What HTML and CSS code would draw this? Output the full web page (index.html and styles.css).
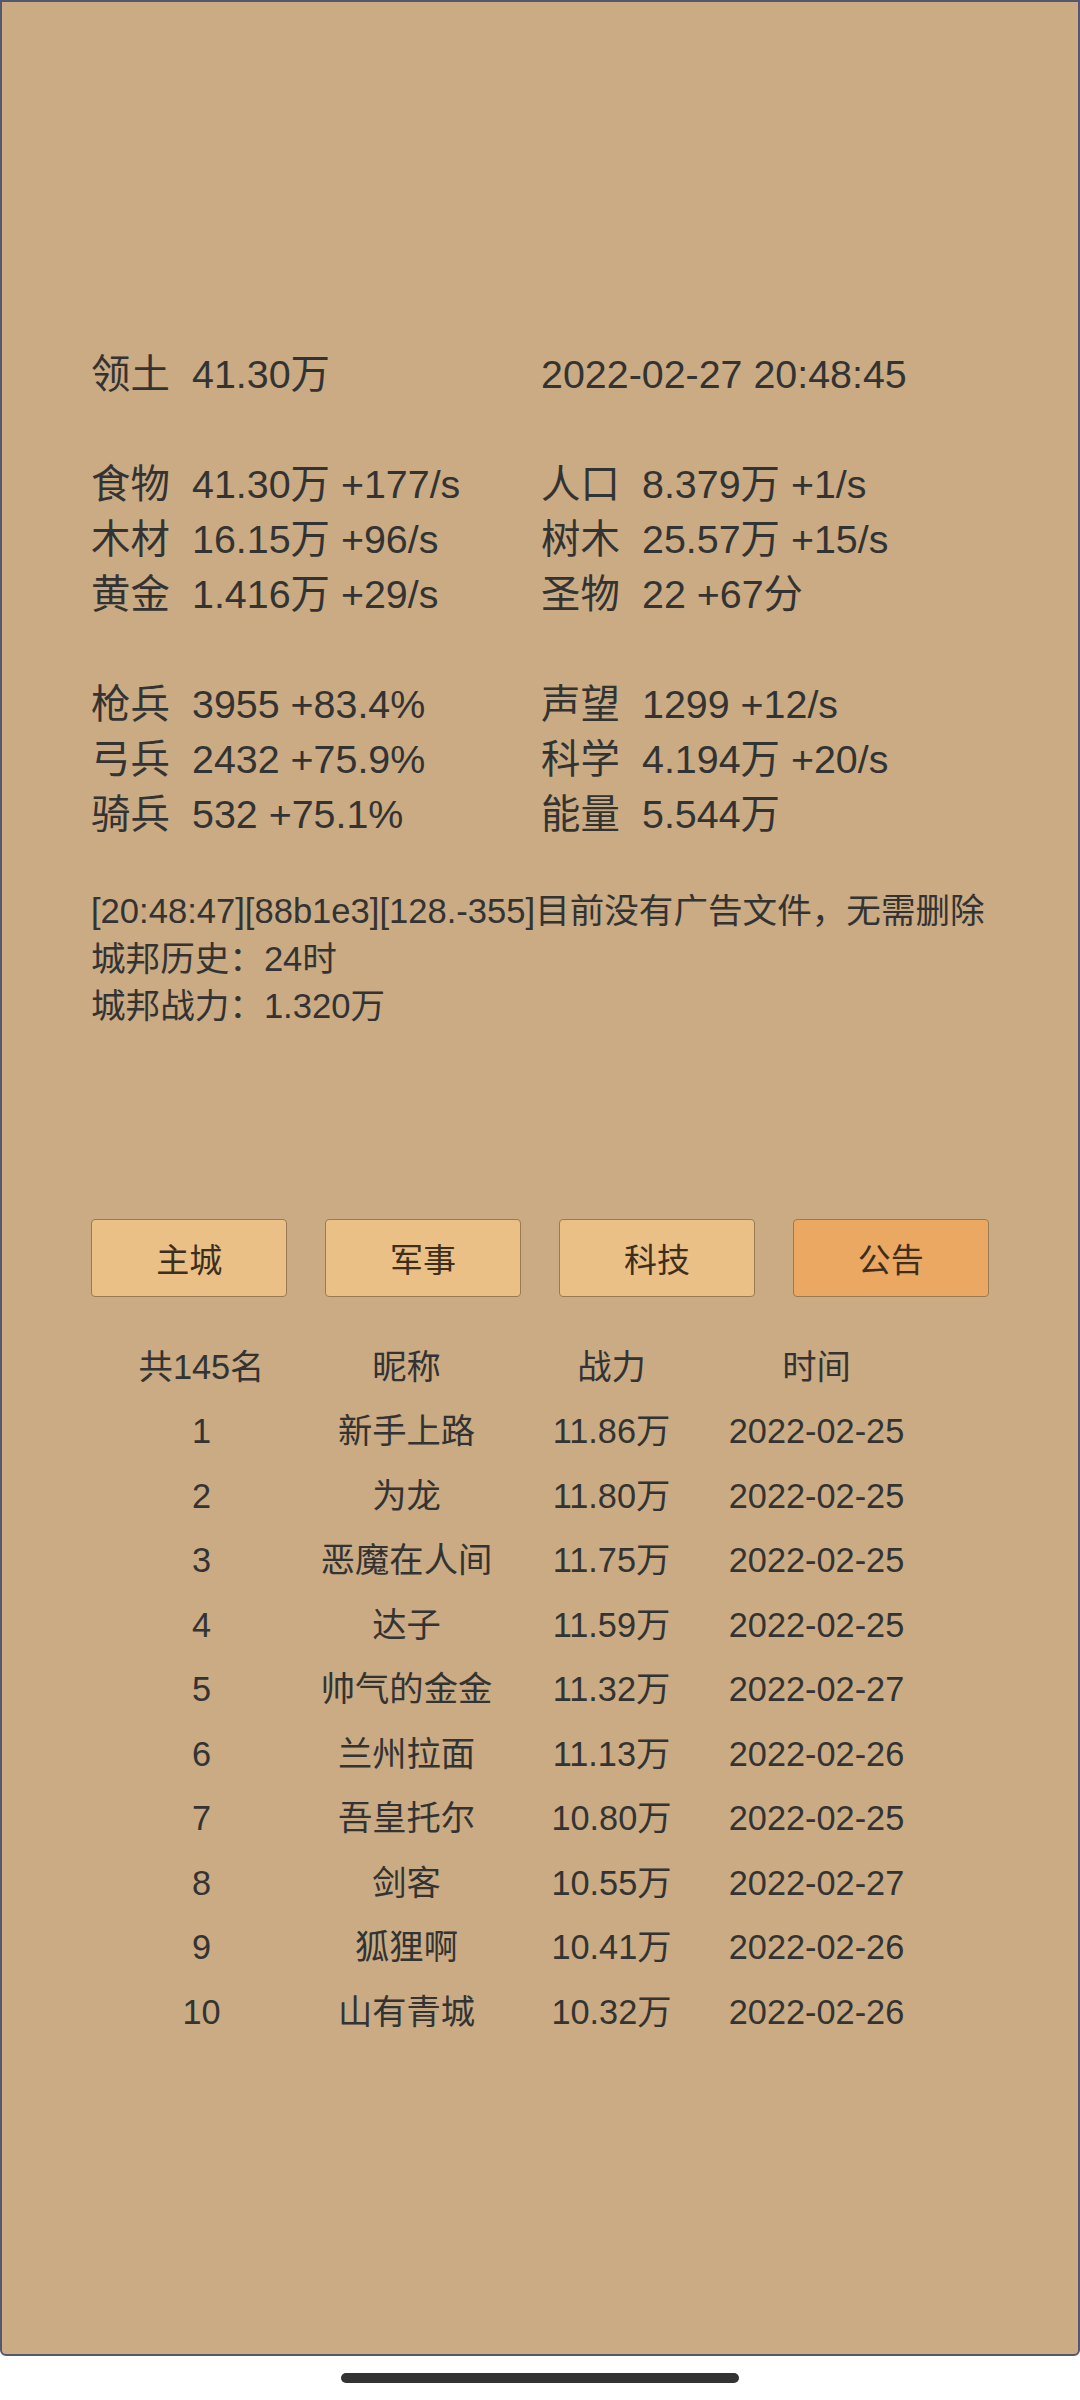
FILE: index.html
```html
<!DOCTYPE html>
<html lang="zh-CN">
<head>
    <meta charset="UTF-8">
    <meta name="viewport" content="width=device-width, initial-scale=1.0">
    <title>城邦</title>
    <link rel="stylesheet" href="styles.css">
</head>
<body>
    <div class="screen">
        <div class="stats">
            <span class="label">领土</span><span class="value">41.30万</span>
            <span class="clock">2022-02-27 20:48:45</span>
            <div class="blank"></div>

            <span class="label">食物</span><span class="value">41.30万 +177/s</span>
            <span class="label">人口</span><span class="value">8.379万 +1/s</span>
            <span class="label">木材</span><span class="value">16.15万 +96/s</span>
            <span class="label">树木</span><span class="value">25.57万 +15/s</span>
            <span class="label">黄金</span><span class="value">1.416万 +29/s</span>
            <span class="label">圣物</span><span class="value">22 +67分</span>
            <div class="blank"></div>

            <span class="label">枪兵</span><span class="value">3955 +83.4%</span>
            <span class="label">声望</span><span class="value">1299 +12/s</span>
            <span class="label">弓兵</span><span class="value">2432 +75.9%</span>
            <span class="label">科学</span><span class="value">4.194万 +20/s</span>
            <span class="label">骑兵</span><span class="value">532 +75.1%</span>
            <span class="label">能量</span><span class="value">5.544万</span>
        </div>

        <div class="log">
            <p>[20:48:47][88b1e3][128.-355]目前没有广告文件，无需删除</p>
            <p>城邦历史：24时</p>
            <p>城邦战力：1.320万</p>
        </div>

        <div class="tabs">
            <button class="tab">主城</button>
            <button class="tab">军事</button>
            <button class="tab">科技</button>
            <button class="tab active">公告</button>
        </div>

        <div class="rank">
            <span>共145名</span><span>昵称</span><span>战力</span><span>时间</span>
            <span>1</span><span>新手上路</span><span>11.86万</span><span>2022-02-25</span>
            <span>2</span><span>为龙</span><span>11.80万</span><span>2022-02-25</span>
            <span>3</span><span>恶魔在人间</span><span>11.75万</span><span>2022-02-25</span>
            <span>4</span><span>达子</span><span>11.59万</span><span>2022-02-25</span>
            <span>5</span><span>帅气的金金</span><span>11.32万</span><span>2022-02-27</span>
            <span>6</span><span>兰州拉面</span><span>11.13万</span><span>2022-02-26</span>
            <span>7</span><span>吾皇托尔</span><span>10.80万</span><span>2022-02-25</span>
            <span>8</span><span>剑客</span><span>10.55万</span><span>2022-02-27</span>
            <span>9</span><span>狐狸啊</span><span>10.41万</span><span>2022-02-26</span>
            <span>10</span><span>山有青城</span><span>10.32万</span><span>2022-02-26</span>
        </div>
    </div>

    <div class="home-bar"></div>
</body>
</html>
```

FILE: styles.css
```css
* {
    margin: 0;
    padding: 0;
    box-sizing: border-box;
}

body {
    font-family: "Liberation Sans", "Noto Sans CJK SC", sans-serif;
    background: #ffffff;
    color: #333333;
    width: 1080px;
}

.screen {
    height: 2356px;
    background: #caab83;
    border: 2px solid #55576e;
    border-radius: 0 0 6px 6px;
    padding: 0 89px;
}

.stats {
    display: grid;
    grid-template-columns: 101px 349px 101px 1fr;
    margin-top: 345px;
    font-size: 39.4px;
    line-height: 55px;
    white-space: nowrap;
}

.stats .clock {
    grid-column: 3 / 5;
}

.stats .blank {
    grid-column: 1 / -1;
    height: 55px;
}

.log {
    margin-top: 46px;
    font-size: 34.6px;
    line-height: 47.5px;
    white-space: nowrap;
}

.tabs {
    display: flex;
    gap: 37.5px;
    margin-top: 188px;
}

.tab {
    flex: 1;
    height: 78px;
    background: #eac086;
    border: 1.5px solid #9a7a52;
    border-radius: 4px;
    font-family: "Liberation Sans", "Noto Sans CJK SC", sans-serif;
    font-size: 33px;
    color: #3d2e1d;
}

.tab.active {
    background: #eba862;
}

.rank {
    display: grid;
    grid-template-columns: repeat(4, 205px);
    margin-top: 38px;
    padding-left: 8px;
    font-size: 34.3px;
    line-height: 64.5px;
    text-align: center;
    white-space: nowrap;
}

.home-bar {
    width: 398px;
    height: 10px;
    margin: 17px auto 0;
    background: #333333;
    border-radius: 5px;
}
```
